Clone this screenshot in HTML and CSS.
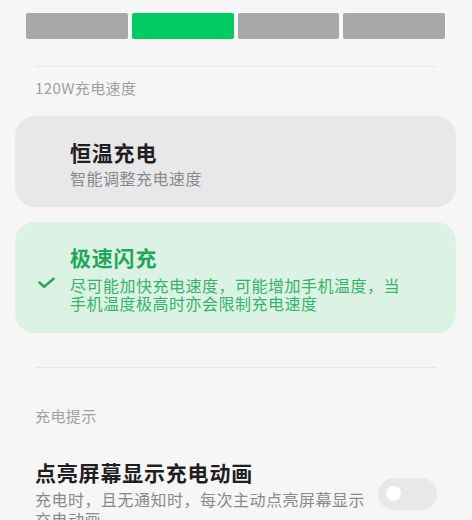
FILE: index.html
```html
<!DOCTYPE html>
<html lang="zh-CN">

<head>
    <meta charset="UTF-8">
    <meta name="viewport" content="width=device-width, initial-scale=1.0">
    <title>充电设置</title>
    <link rel="stylesheet" href="styles.css">
</head>

<body>
    <div class="speed-bar">
        <div class="seg"></div>
        <div class="seg seg-on"></div>
        <div class="seg"></div>
        <div class="seg"></div>
    </div>

    <div class="divider"></div>
    <div class="section-title">120W充电速度</div>

    <div class="option">
        <div class="check"></div>
        <div class="option-text">
            <div class="option-title">恒温充电</div>
            <div class="option-desc">智能调整充电速度</div>
        </div>
    </div>

    <div class="option option-on">
        <div class="check">
            <svg width="18" height="12" viewBox="0 0 18 12">
                <path d="M1.5 5.5 L6.5 10 L16.5 1.5" fill="none" stroke="#1fa85a" stroke-width="2.6"
                    stroke-linecap="round" stroke-linejoin="round" />
            </svg>
        </div>
        <div class="option-text">
            <div class="option-title">极速闪充</div>
            <div class="option-desc">尽可能加快充电速度，可能增加手机温度，当手机温度极高时亦会限制充电速度</div>
        </div>
    </div>

    <div class="divider divider-low"></div>
    <div class="section-title section-gap">充电提示</div>

    <div class="row">
        <div class="row-text">
            <div class="row-title">点亮屏幕显示充电动画</div>
            <div class="row-desc">充电时，且无通知时，每次主动点亮屏幕显示充电动画</div>
        </div>
        <div class="switch"><div class="knob"></div></div>
    </div>
</body>

</html>
```

FILE: styles.css
```css
* {
    box-sizing: border-box;
    font-family: "Noto Sans CJK SC", "Noto Sans", sans-serif;
}

:root {
    --color-bg: #f6f6f6;
    --color-green: #1fa85a;
    --color-green-light: #dcf2e4;
    --color-gray-card: #e8e7ea;
    --color-muted: #a0a0a0;
}

body {
    margin: 0;
    background-color: var(--color-bg);
    overflow: hidden;
}

.speed-bar {
    display: flex;
    gap: 4px;
    margin: 13px 27px 0 26px;
    height: 26px;
}

.seg {
    flex: 1;
    background-color: #a7a9a9;
    border-radius: 2px;
}

.seg-on {
    background-color: #00cc63;
}

.divider {
    height: 1px;
    background-color: #e6e6e6;
    margin: 27px 36px 0 35px;
}

.divider-low {
    margin-top: 34px;
}

.section-title {
    margin: 11px 35px 0;
    font-size: 15px;
    line-height: 20px;
    letter-spacing: 0.4px;
    color: var(--color-muted);
}

.section-gap {
    margin-top: 38px;
}

.option {
    display: grid;
    grid-template-columns: 17px 1fr;
    column-gap: 15px;
    align-items: center;
    margin: 18px 16px 0 15px;
    padding: 22px 48px 17px 23px;
    background-color: var(--color-gray-card);
    border-radius: 20px;
}

.option + .option {
    margin-top: 15px;
}

.option-on {
    padding: 21px 48px 21px 23px;
    background-color: var(--color-green-light);
}

.check {
    display: flex;
    padding-top: 10px;
}

.option-title {
    font-size: 21px;
    line-height: 28px;
    font-weight: bold;
    letter-spacing: 0.8px;
    color: #1f1f1f;
}

.option-desc {
    font-size: 16px;
    line-height: 24px;
    letter-spacing: 0.5px;
    color: #8a8a8a;
}

.option-on .option-title {
    color: var(--color-green);
}

.option-on .option-desc {
    margin-top: 5px;
    line-height: 18px;
    color: #35b46b;
}

.row {
    display: flex;
    align-items: center;
    gap: 8px;
    margin: 32px 35px 0;
}

.row-text {
    flex: 1;
}

.row-title {
    font-size: 21px;
    line-height: 28px;
    font-weight: bold;
    letter-spacing: 0.8px;
    color: #1f1f1f;
}

.row-desc {
    margin-top: 3px;
    font-size: 16px;
    line-height: 20px;
    letter-spacing: 0.5px;
    color: #8a8a8a;
}

.switch {
    flex: none;
    display: flex;
    align-items: center;
    width: 59px;
    height: 32px;
    padding-left: 8px;
    border-radius: 16px;
    background-color: #e8e8e8;
}

.knob {
    width: 15px;
    height: 15px;
    border-radius: 50%;
    background-color: #fff;
}
```
